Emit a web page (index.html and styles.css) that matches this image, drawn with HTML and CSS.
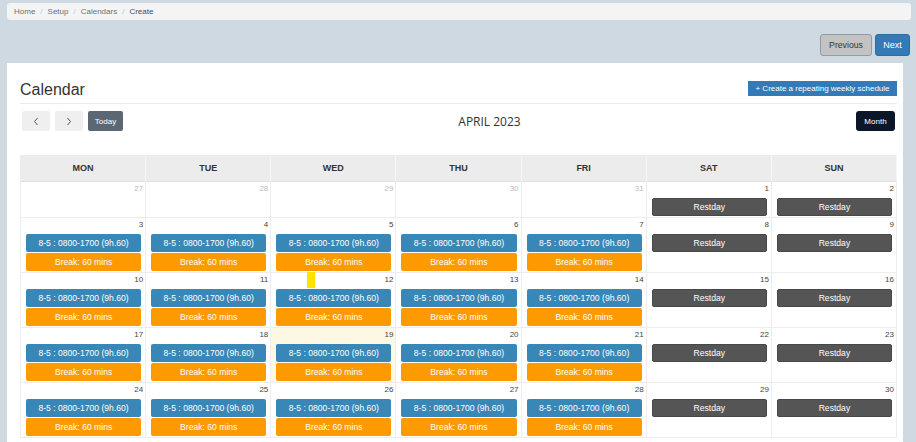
FILE: index.html
```html
<!DOCTYPE html>
<html lang="en">
<head>
<meta charset="utf-8">
<title>Calendars - Create</title>
<link rel="stylesheet" href="styles.css">
</head>
<body>
<div class="page">
  <nav class="crumbs">
    <span class="crumb">Home</span><span class="sep">/</span>
    <span class="crumb">Setup</span><span class="sep">/</span>
    <span class="crumb">Calendars</span><span class="sep">/</span>
    <span class="crumb active">Create</span>
  </nav>

  <div class="actions">
    <button class="btn btn-prev">Previous</button>
    <button class="btn btn-next">Next</button>
  </div>

  <section class="card">
    <div class="card-head">
      <h1 class="title">Calendar</h1>
      <button class="btn btn-create">+ Create a repeating weekly schedule</button>
    </div>

    <div class="toolbar">
      <div class="tool-left">
        <button class="btn btn-nav" aria-label="prev"><svg width="6" height="9" viewBox="0 0 6 9"><polyline points="4.5,1 1.5,4.5 4.5,8" fill="none" stroke="#555" stroke-width="1"/></svg></button>
        <button class="btn btn-nav" aria-label="next"><svg width="6" height="9" viewBox="0 0 6 9"><polyline points="1.5,1 4.5,4.5 1.5,8" fill="none" stroke="#555" stroke-width="1"/></svg></button>
        <button class="btn btn-today">Today</button>
      </div>
      <h2 class="month-title">APRIL 2023</h2>
      <button class="btn btn-month">Month</button>
    </div>

    <div class="cal">
      <div class="hd">MON</div><div class="hd">TUE</div><div class="hd">WED</div><div class="hd">THU</div><div class="hd">FRI</div><div class="hd">SAT</div><div class="hd">SUN</div>

      <div class="day other"><div class="num">27</div></div>
      <div class="day other"><div class="num">28</div></div>
      <div class="day other"><div class="num">29</div></div>
      <div class="day other"><div class="num">30</div></div>
      <div class="day other"><div class="num">31</div></div>
      <div class="day"><div class="num">1</div><div class="ev rest">Restday</div></div>
      <div class="day"><div class="num">2</div><div class="ev rest">Restday</div></div>

      <div class="day"><div class="num">3</div><div class="ev shift">8-5 : 0800-1700 (9h.60)</div><div class="ev brk">Break: 60 mins</div></div>
      <div class="day"><div class="num">4</div><div class="ev shift">8-5 : 0800-1700 (9h.60)</div><div class="ev brk">Break: 60 mins</div></div>
      <div class="day"><div class="num">5</div><div class="ev shift">8-5 : 0800-1700 (9h.60)</div><div class="ev brk">Break: 60 mins</div></div>
      <div class="day"><div class="num">6</div><div class="ev shift">8-5 : 0800-1700 (9h.60)</div><div class="ev brk">Break: 60 mins</div></div>
      <div class="day"><div class="num">7</div><div class="ev shift">8-5 : 0800-1700 (9h.60)</div><div class="ev brk">Break: 60 mins</div></div>
      <div class="day"><div class="num">8</div><div class="ev rest">Restday</div></div>
      <div class="day"><div class="num">9</div><div class="ev rest">Restday</div></div>

      <div class="day"><div class="num">10</div><div class="ev shift">8-5 : 0800-1700 (9h.60)</div><div class="ev brk">Break: 60 mins</div></div>
      <div class="day"><div class="num">11</div><div class="ev shift">8-5 : 0800-1700 (9h.60)</div><div class="ev brk">Break: 60 mins</div></div>
      <div class="day"><div class="marker"></div><div class="num">12</div><div class="ev shift">8-5 : 0800-1700 (9h.60)</div><div class="ev brk">Break: 60 mins</div></div>
      <div class="day"><div class="num">13</div><div class="ev shift">8-5 : 0800-1700 (9h.60)</div><div class="ev brk">Break: 60 mins</div></div>
      <div class="day"><div class="num">14</div><div class="ev shift">8-5 : 0800-1700 (9h.60)</div><div class="ev brk">Break: 60 mins</div></div>
      <div class="day"><div class="num">15</div><div class="ev rest">Restday</div></div>
      <div class="day"><div class="num">16</div><div class="ev rest">Restday</div></div>

      <div class="day"><div class="num">17</div><div class="ev shift">8-5 : 0800-1700 (9h.60)</div><div class="ev brk">Break: 60 mins</div></div>
      <div class="day"><div class="num">18</div><div class="ev shift">8-5 : 0800-1700 (9h.60)</div><div class="ev brk">Break: 60 mins</div></div>
      <div class="day today"><div class="num">19</div><div class="ev shift">8-5 : 0800-1700 (9h.60)</div><div class="ev brk">Break: 60 mins</div></div>
      <div class="day"><div class="num">20</div><div class="ev shift">8-5 : 0800-1700 (9h.60)</div><div class="ev brk">Break: 60 mins</div></div>
      <div class="day"><div class="num">21</div><div class="ev shift">8-5 : 0800-1700 (9h.60)</div><div class="ev brk">Break: 60 mins</div></div>
      <div class="day"><div class="num">22</div><div class="ev rest">Restday</div></div>
      <div class="day"><div class="num">23</div><div class="ev rest">Restday</div></div>

      <div class="day"><div class="num">24</div><div class="ev shift">8-5 : 0800-1700 (9h.60)</div><div class="ev brk">Break: 60 mins</div></div>
      <div class="day"><div class="num">25</div><div class="ev shift">8-5 : 0800-1700 (9h.60)</div><div class="ev brk">Break: 60 mins</div></div>
      <div class="day"><div class="num">26</div><div class="ev shift">8-5 : 0800-1700 (9h.60)</div><div class="ev brk">Break: 60 mins</div></div>
      <div class="day"><div class="num">27</div><div class="ev shift">8-5 : 0800-1700 (9h.60)</div><div class="ev brk">Break: 60 mins</div></div>
      <div class="day"><div class="num">28</div><div class="ev shift">8-5 : 0800-1700 (9h.60)</div><div class="ev brk">Break: 60 mins</div></div>
      <div class="day"><div class="num">29</div><div class="ev rest">Restday</div></div>
      <div class="day"><div class="num">30</div><div class="ev rest">Restday</div></div>
    </div>
  </section>
</div>
</body>
</html>
```

FILE: styles.css
```css
* { box-sizing: border-box; }

html, body {
  margin: 0;
  padding: 0;
  overflow: hidden;
}

body {
  background: #cfd9e2;
  font-family: "Liberation Sans", Arial, sans-serif;
  color: #333;
}

.page {
  padding: 3px 0 0 7px;
}

.crumbs {
  display: flex;
  align-items: center;
  height: 17px;
  margin-right: 5px;
  padding: 0 7px;
  background: #f4f4f4;
  border-radius: 3px;
  font-size: 8px;
  line-height: 17px;
}

.crumb { color: #6f6f6f; }
.crumb.active { color: #3d4d70; }
.sep { color: #c8c8c8; padding: 0 5px; }

.btn {
  font-family: "Liberation Sans", Arial, sans-serif;
  border: 0;
  padding: 0;
  cursor: pointer;
  color: #fff;
}

.actions {
  display: flex;
  justify-content: flex-end;
  gap: 3px;
  margin: 14px 6px 0 0;
}

.btn-prev {
  width: 52px;
  height: 22px;
  background: #c3c3c3;
  border: 1px solid #8e9cab;
  border-radius: 3px;
  color: #333;
  font-size: 8.7px;
}

.btn-next {
  width: 35px;
  height: 22px;
  background: #337ab7;
  border: 1px solid #2e6da4;
  border-radius: 3px;
  font-size: 9px;
}

.card {
  margin: 7px 13px 0 0;
  padding: 17px 6px 60px 13px;
  background: #fff;
}

.card-head {
  display: flex;
  justify-content: space-between;
  align-items: flex-start;
  height: 24px;
  border-bottom: 1px solid #ececec;
}

.title {
  margin: 0;
  font-size: 16px;
  line-height: 20px;
  font-weight: normal;
  color: #333;
}

.btn-create {
  margin-top: 1px;
  width: 149px;
  height: 15px;
  background: #337ab7;
  font-size: 8px;
  line-height: 15px;
}

.toolbar {
  display: flex;
  justify-content: space-between;
  align-items: center;
  height: 20px;
  margin-top: 7px;
  padding: 0 2px;
}

.tool-left {
  display: flex;
  gap: 5px;
}

.btn-nav {
  width: 28px;
  height: 20px;
  background: #efefef;
  border-radius: 2px;
  display: flex;
  align-items: center;
  justify-content: center;
}

.btn-today {
  width: 35px;
  height: 20px;
  background: #5b6772;
  border-radius: 2px;
  font-size: 8px;
}

.month-title {
  margin: 0;
  font-family: "Open Sans", "Liberation Sans", sans-serif;
  font-size: 12px;
  font-weight: normal;
  color: #333;
}

.btn-month {
  width: 39px;
  height: 20px;
  background: #0b1729;
  border-radius: 3px;
  font-size: 8px;
}

.cal {
  display: grid;
  grid-template-columns: repeat(7, 1fr);
  grid-template-rows: 27px 36px repeat(4, 55px);
  margin-top: 24px;
  border-left: 1px solid #ededed;
}

.hd {
  background: #ececec;
  border-right: 1px solid #f6f6f6;
  border-bottom: 1px solid #e2e2e2;
  display: flex;
  align-items: center;
  justify-content: center;
  font-size: 9px;
  font-weight: bold;
  color: #333;
}

.day {
  position: relative;
  border-right: 1px solid #ededed;
  border-bottom: 1px solid #ededed;
}

.day.today { background: #fcf8e3; }

.num {
  height: 16px;
  padding: 1px 2px 0 0;
  text-align: right;
  font-size: 8px;
  line-height: 12px;
  color: #444;
}

.day.other .num { color: #bbb; }

.ev {
  height: 18px;
  margin: 0 4px 1px 5px;
  border-radius: 2px;
  text-align: center;
  font-size: 8.6px;
  line-height: 18px;
  color: #fff;
  white-space: nowrap;
  overflow: hidden;
}

.shift { background: #3987b6; }
.brk { background: #fd9a00; }
.rest {
  background: #555;
  border: 1px solid #474747;
  line-height: 16px;
}

.marker {
  position: absolute;
  left: 36px;
  top: -1px;
  width: 8px;
  height: 16px;
  background: #ffe200;
}
```
